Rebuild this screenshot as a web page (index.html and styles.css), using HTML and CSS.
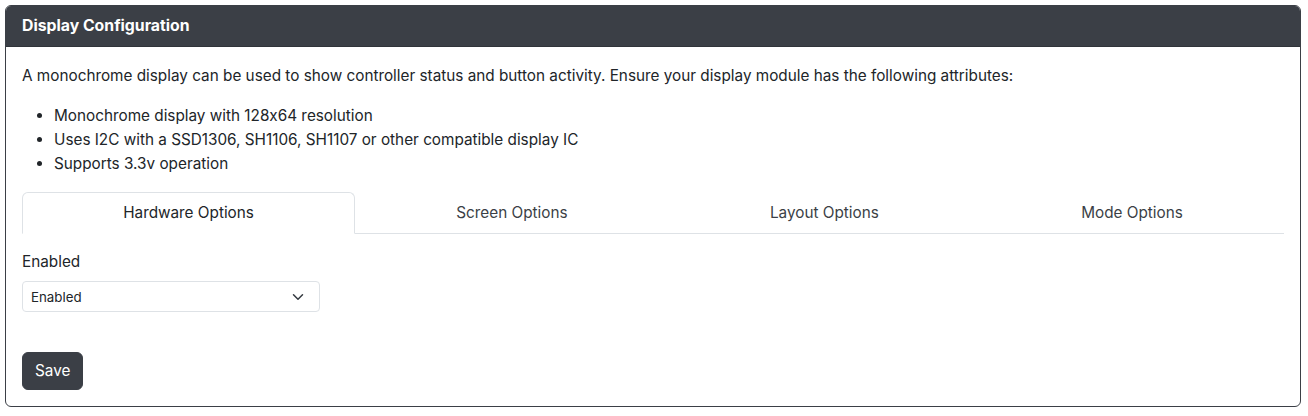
FILE: index.html
```html
<!DOCTYPE html>
<html>
<head>
<meta charset="utf-8">
<title>Display Configuration</title>
<link rel="stylesheet" href="styles.css">
</head>
<body>
	<div class="card">
		<div class="card-header">Display Configuration</div>
		<div class="card-body">
			<p>A monochrome display can be used to show controller status and button activity. Ensure your display module has the following attributes:</p>
			<ul>
				<li>Monochrome display with 128x64 resolution</li>
				<li>Uses I2C with a SSD1306, SH1106, SH1107 or other compatible display IC</li>
				<li>Supports 3.3v operation</li>
			</ul>
			<div class="nav-tabs">
				<div class="nav-link active">Hardware Options</div>
				<div class="nav-link">Screen Options</div>
				<div class="nav-link">Layout Options</div>
				<div class="nav-link">Mode Options</div>
			</div>
			<div class="tab-content">
				<label class="form-label" for="enabled">Enabled</label>
				<div class="select-wrap">
					<select id="enabled" class="form-select">
						<option>Enabled</option>
						<option>Disabled</option>
					</select>
					<svg class="chevron" width="16" height="12" viewBox="0 0 16 16"><path d="m2 5 6 6 6-6" fill="none" stroke="#343a40" stroke-width="2" stroke-linecap="round" stroke-linejoin="round"/></svg>
				</div>
			</div>
			<button class="btn">Save</button>
		</div>
	</div>
</body>
</html>
```

FILE: styles.css
```css
*{box-sizing:border-box;}
body{
	margin:0;
	padding:5px 7px 0 5px;
	font-family:Inter,"Liberation Sans",sans-serif;
	font-size:15.3px;
	line-height:24px;
	color:#212529;
	background:#fff;
	font-feature-settings:"calt" 0;
}

.card{
	border:1px solid #3b3f46;
	border-radius:6px;
	overflow:hidden;
}
.card-header{
	padding:8px 16px;
	background:#3b3f46;
	border-bottom:1px solid #30343a;
	color:#fff;
	font-weight:bold;
	font-size:15.8px;
}
.card-body{padding:17px 16px 16px;}
.card-body p{margin:0 0 16px;}
.card-body ul{margin:0 0 16px;padding-left:32px;}

.nav-tabs{
	display:flex;
	border-bottom:1px solid #dee2e6;
}
.nav-link{
	flex:1 1 auto;
	text-align:center;
	padding:8px 16px;
	margin-bottom:-1px;
	border:1px solid transparent;
	border-top-left-radius:6px;
	border-top-right-radius:6px;
	color:#3b3f46;
	cursor:pointer;
}
.nav-link.active{
	color:#212529;
	border-color:#dee2e6 #dee2e6 #fff;
	background:#fff;
}

.tab-content{padding-top:16px;}
.form-label{display:block;margin-bottom:7px;}
.select-wrap{position:relative;width:298px;}
.form-select{
	display:block;
	width:100%;
	height:31px;
	padding:4px 32px 4px 8px;
	font-family:inherit;
	font-size:13.3px;
	font-feature-settings:"calt" 0;
	color:#212529;
	background:#fff;
	border:1px solid #dee2e6;
	border-radius:4px;
	-webkit-appearance:none;
	appearance:none;
}
.chevron{position:absolute;right:14px;top:10px;pointer-events:none;}

.btn{
	margin-top:40px;
	padding:6px 12px;
	font-family:inherit;
	font-size:15.3px;
	line-height:24px;
	color:#fff;
	background:#3b3f46;
	border:1px solid #3b3f46;
	border-radius:6px;
	cursor:pointer;
}
```
